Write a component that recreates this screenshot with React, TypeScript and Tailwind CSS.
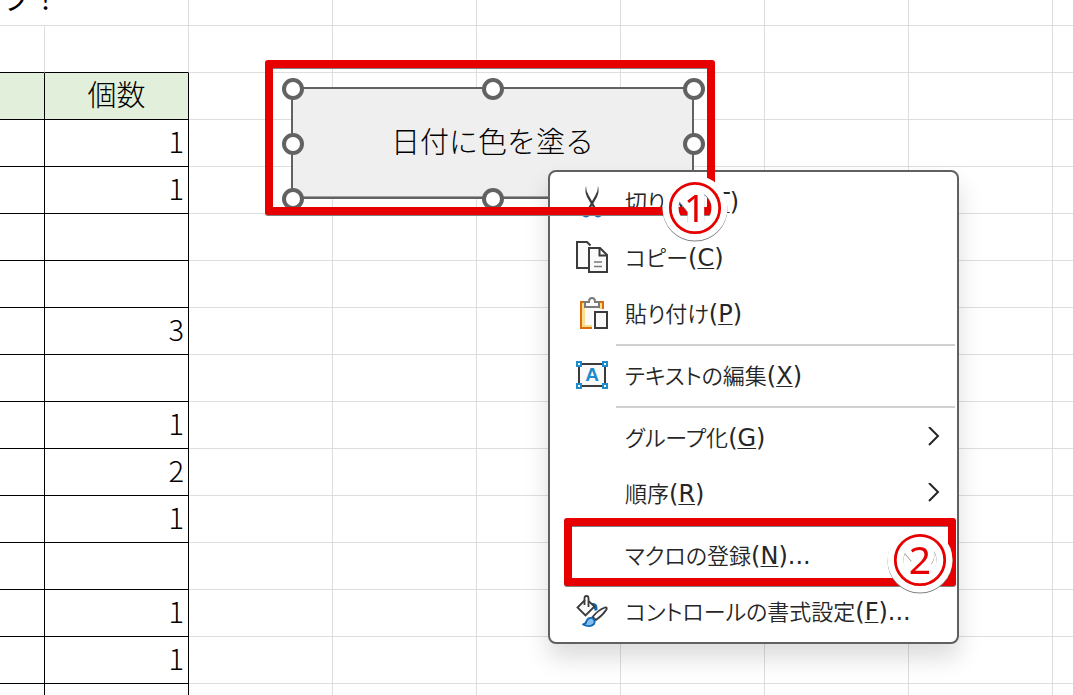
import React from "react";

const quantities = ["1", "1", "", "", "3", "", "1", "2", "1", "", "1", "1", ""];
const emptyColumns = [0, 1, 2, 3, 4, 5, 6];

function EmptyCells() {
  return (
    <>
      {emptyColumns.map((c) => (
        <td key={c} className="border-r border-b border-[#dedede]" />
      ))}
    </>
  );
}

function Sheet() {
  return (
    <table className="w-[1197px] table-fixed border-separate border-spacing-0 text-[29px] leading-10 font-light text-black">
      <colgroup>
        <col className="w-[45px]" />
        <col className="w-36" />
        {emptyColumns.map((c) => (
          <col key={c} className="w-36" />
        ))}
      </colgroup>
      <tbody>
        <tr className="h-[26px]">
          <td colSpan={2} className="border-r border-b border-[#dedede] p-0 align-bottom">
            <div className="flex h-[25px] items-end overflow-hidden pb-3 pl-0.5 font-normal">
              <span className="leading-8">プ！</span>
            </div>
          </td>
          <EmptyCells />
        </tr>
        <tr className="h-[47px]">
          <td className="border-r border-b border-r-[#dedede] border-b-black" />
          <td className="border-r border-b border-r-[#dedede] border-b-black" />
          <EmptyCells />
        </tr>
        <tr className="h-[47px]">
          <td className="border-r border-b border-black bg-[#e2efda]" />
          <th scope="col" className="border-r border-b border-black bg-[#e2efda] p-0 text-center align-top font-light">
            個数
          </th>
          <EmptyCells />
        </tr>
        {quantities.map((q, i) => (
          <tr key={i} className="h-[47px]">
            <td className="border-r border-b border-black" />
            <td className="border-r border-b border-black py-0 pr-1 pl-0 text-right align-top">{q}</td>
            <EmptyCells />
          </tr>
        ))}
      </tbody>
    </table>
  );
}

function CutIcon() {
  return (
    <svg viewBox="0 0 32 32" className="size-8" fill="none" aria-hidden="true">
      <path d="M10 0 Q10 5 12.500 9 L20.500 23 L18.500 24 L11 11 Q8.500 6 10 0Z" fill="#3b3b3b" />
      <path d="M22 0 Q22 5 19.500 9 L11.500 23 L13.500 24 L21 11 Q23.500 6 22 0Z" fill="#3b3b3b" />
      <circle cx="10" cy="26.500" r="4" stroke="#1e6fb8" strokeWidth="2" />
      <circle cx="22" cy="26.500" r="4" stroke="#1e6fb8" strokeWidth="2" />
    </svg>
  );
}

function CopyIcon() {
  return (
    <svg viewBox="0 0 32 32" className="size-8 overflow-visible" fill="none" stroke="#3b3b3b" strokeWidth="2" aria-hidden="true">
      <path d="M12 26H1V0H11L14.500 3.500" fill="#fafafa" />
      <path d="M13 6H24L31 13V30H13Z" fill="#fafafa" />
      <path d="M23.500 6V13.500H31" />
      <path d="M18 20H26M18 24.500H26" stroke="#7a7a7a" strokeWidth="1.600" />
    </svg>
  );
}

function PasteIcon() {
  return (
    <svg viewBox="0 0 32 32" className="size-8 overflow-visible" fill="none" strokeWidth="2" aria-hidden="true">
      <path d="M4 3H28V31H4Z" fill="#fadf8e" />
      <path d="M9 7H23V27H9Z" fill="#fafafa" />
      <path d="M17 30H5V4H27V12" stroke="#dc6d0a" />
      <path d="M9 9V4H13Q13 0 16 0Q19 0 19 4H23V9Z" fill="#fafafa" stroke="#7a7a7a" />
      <path d="M16 11H32V31H16Z" fill="#fff" />
      <path d="M19 14H31V30H19Z" fill="#fafafa" stroke="#3b3b3b" />
    </svg>
  );
}

function EditTextIcon() {
  const corners = [
    [1, 2],
    [27, 2],
    [1, 24],
    [27, 24],
  ];
  return (
    <svg viewBox="0 0 32 32" className="size-8" aria-hidden="true">
      <rect x="3" y="4" width="26" height="22" fill="#fafafa" stroke="#3b3b3b" strokeWidth="2" />
      {corners.map(([x, y]) => (
        <rect key={`${x}-${y}`} x={x} y={y} width="4" height="4" fill="#fff" stroke="#1e8bcd" strokeWidth="2" />
      ))}
      <text x="16" y="21" textAnchor="middle" fill="#1e8bcd" fontSize="19" fontWeight="700" fontFamily="Liberation Sans, sans-serif">
        A
      </text>
    </svg>
  );
}

function FormatIcon() {
  return (
    <svg viewBox="0 0 32 32" className="size-8 overflow-visible" fill="none" aria-hidden="true">
      <path d="M16 7Q22 6 21.500 14L18.500 15Q19 12 15 10Z" fill="#0f68b3" />
      <path d="M9 4L1.500 11.500L9.500 19.500L18.500 10.500L12.500 5" fill="#fafafa" stroke="#3b3b3b" strokeWidth="1.800" />
      <path d="M8.500 9V2Q8.500 0 10.500 0Q12.500 0 12.500 2V11" stroke="#3b3b3b" strokeWidth="1.800" />
      <path d="M16.500 21Q22 14 29 11.500Q31.500 11 30.500 13.500Q27 19 20 24Z" fill="#fafafa" stroke="#3b3b3b" strokeWidth="1.800" />
      <path d="M7 28.500Q10 28 10.500 25Q12 21 16 22Q20 24 18 28Q14 32 7 28.500Z" fill="#83beec" stroke="#0f68b3" strokeWidth="1.800" strokeLinejoin="round" />
    </svg>
  );
}

function Chevron() {
  return (
    <svg viewBox="0 0 12 20" className="h-5 w-3" fill="none" stroke="#262626" strokeWidth="2" aria-hidden="true">
      <path d="M1 0L10 9L1 18" />
    </svg>
  );
}

type ItemProps = {
  label: string;
  accessKey: string;
  icon?: React.ReactNode;
  trailing?: string;
  submenu?: boolean;
};

function MenuItem({ label, accessKey, icon, trailing = "", submenu = false }: ItemProps) {
  return (
    <li role="none">
      <button
        type="button"
        role="menuitem"
        aria-haspopup={submenu ? "menu" : undefined}
        className="flex h-14 w-full items-center gap-[17px] pr-[17px] pb-0.5 pl-[26px] text-left text-2xl whitespace-nowrap text-[#262626]"
      >
        <span className="mt-0.5 size-8 shrink-0">{icon}</span>
        <span className="grow">
          <span className="text-[22px] font-[350] [font-feature-settings:'palt']">{label}</span>
          <span className="font-['DejaVu_Sans',sans-serif] font-normal">
            (<span className="underline decoration-1 underline-offset-2">{accessKey}</span>){trailing}
          </span>
        </span>
        {submenu && <Chevron />}
      </button>
    </li>
  );
}

function Separator() {
  return (
    <li role="separator" className="py-0.5 pr-0.5 pl-[66px]">
      <div className="h-0.5 bg-[#d0d0d0]" />
    </li>
  );
}

function ContextMenu() {
  return (
    <ul
      role="menu"
      className="absolute top-[170px] left-[548px] w-[411px] rounded-lg border-2 border-[#606060] bg-white py-0.5 shadow-[0_14px_24px_rgba(0,0,0,0.14)]"
    >
      <MenuItem label="切り取り" accessKey="T" icon={<CutIcon />} />
      <MenuItem label="コピー" accessKey="C" icon={<CopyIcon />} />
      <MenuItem label="貼り付け" accessKey="P" icon={<PasteIcon />} />
      <Separator />
      <MenuItem label="テキストの編集" accessKey="X" icon={<EditTextIcon />} />
      <Separator />
      <MenuItem label="グループ化" accessKey="G" submenu />
      <MenuItem label="順序" accessKey="R" submenu />
      <Separator />
      <MenuItem label="マクロの登録" accessKey="N" trailing="..." />
      <MenuItem label="コントロールの書式設定" accessKey="F" trailing="..." icon={<FormatIcon />} />
    </ul>
  );
}

const handle = "absolute size-[22px] -translate-x-1/2 -translate-y-1/2 rounded-full border-4 border-[#626262] bg-white";

function SelectedButton() {
  return (
    <div className="absolute top-[87px] left-[291px] h-28 w-[403px]">
      <button
        type="button"
        className="size-full border-2 border-[#626262] bg-[#efefef] pb-1 text-[29px] font-light text-black shadow-[inset_0_-1px_0_#a0a0a0]"
      >
        日付に色を塗る
      </button>
      <span className={`${handle} top-0.5 left-0.5`} />
      <span className={`${handle} top-0.5 left-1/2`} />
      <span className={`${handle} top-0.5 left-full`} />
      <span className={`${handle} top-[57px] left-0.5`} />
      <span className={`${handle} top-[57px] left-full`} />
      <span className={`${handle} top-full left-0.5`} />
      <span className={`${handle} top-full left-1/2`} />
    </div>
  );
}

function Badge({ n }: { n: string }) {
  return (
    <svg viewBox="0 0 68 68" className="size-[68px] overflow-visible" fill="none">
      <g className="[filter:drop-shadow(0_1px_0_#808080)]" stroke="#fff">
        <circle cx="34" cy="34" r="24.500" strokeWidth="16" />
        <text
          x="34"
          y="48"
          textAnchor="middle"
          fontSize="39"
          fontFamily="'Noto Sans', sans-serif"
          fill="#e60000"
          strokeWidth="13"
          paintOrder="stroke"
        >
          {n}
        </text>
      </g>
      <circle cx="34" cy="34" r="24.700" stroke="#e60000" strokeWidth="2.800" />
    </svg>
  );
}

const frame = "pointer-events-none absolute rounded-[3px] border-8 border-[#e60000] [filter:drop-shadow(0_1px_0_#808080)]";

export default function App() {
  return (
    <main
      lang="ja"
      className="relative h-screen overflow-hidden bg-white font-['Noto_Sans_CJK_JP',sans-serif]"
    >
      <Sheet />
      <SelectedButton />
      <ContextMenu />
      <div className={`${frame} top-[60px] left-[265px] h-[155px] w-[450px]`} />
      <div className={`${frame} top-[518px] left-[564px] h-[68px] w-[392px]`} />
      <div className="pointer-events-none absolute top-[174px] left-[661px]">
        <Badge n="1" />
      </div>
      <div className="pointer-events-none absolute top-[526px] left-[886px]">
        <Badge n="2" />
      </div>
    </main>
  );
}
